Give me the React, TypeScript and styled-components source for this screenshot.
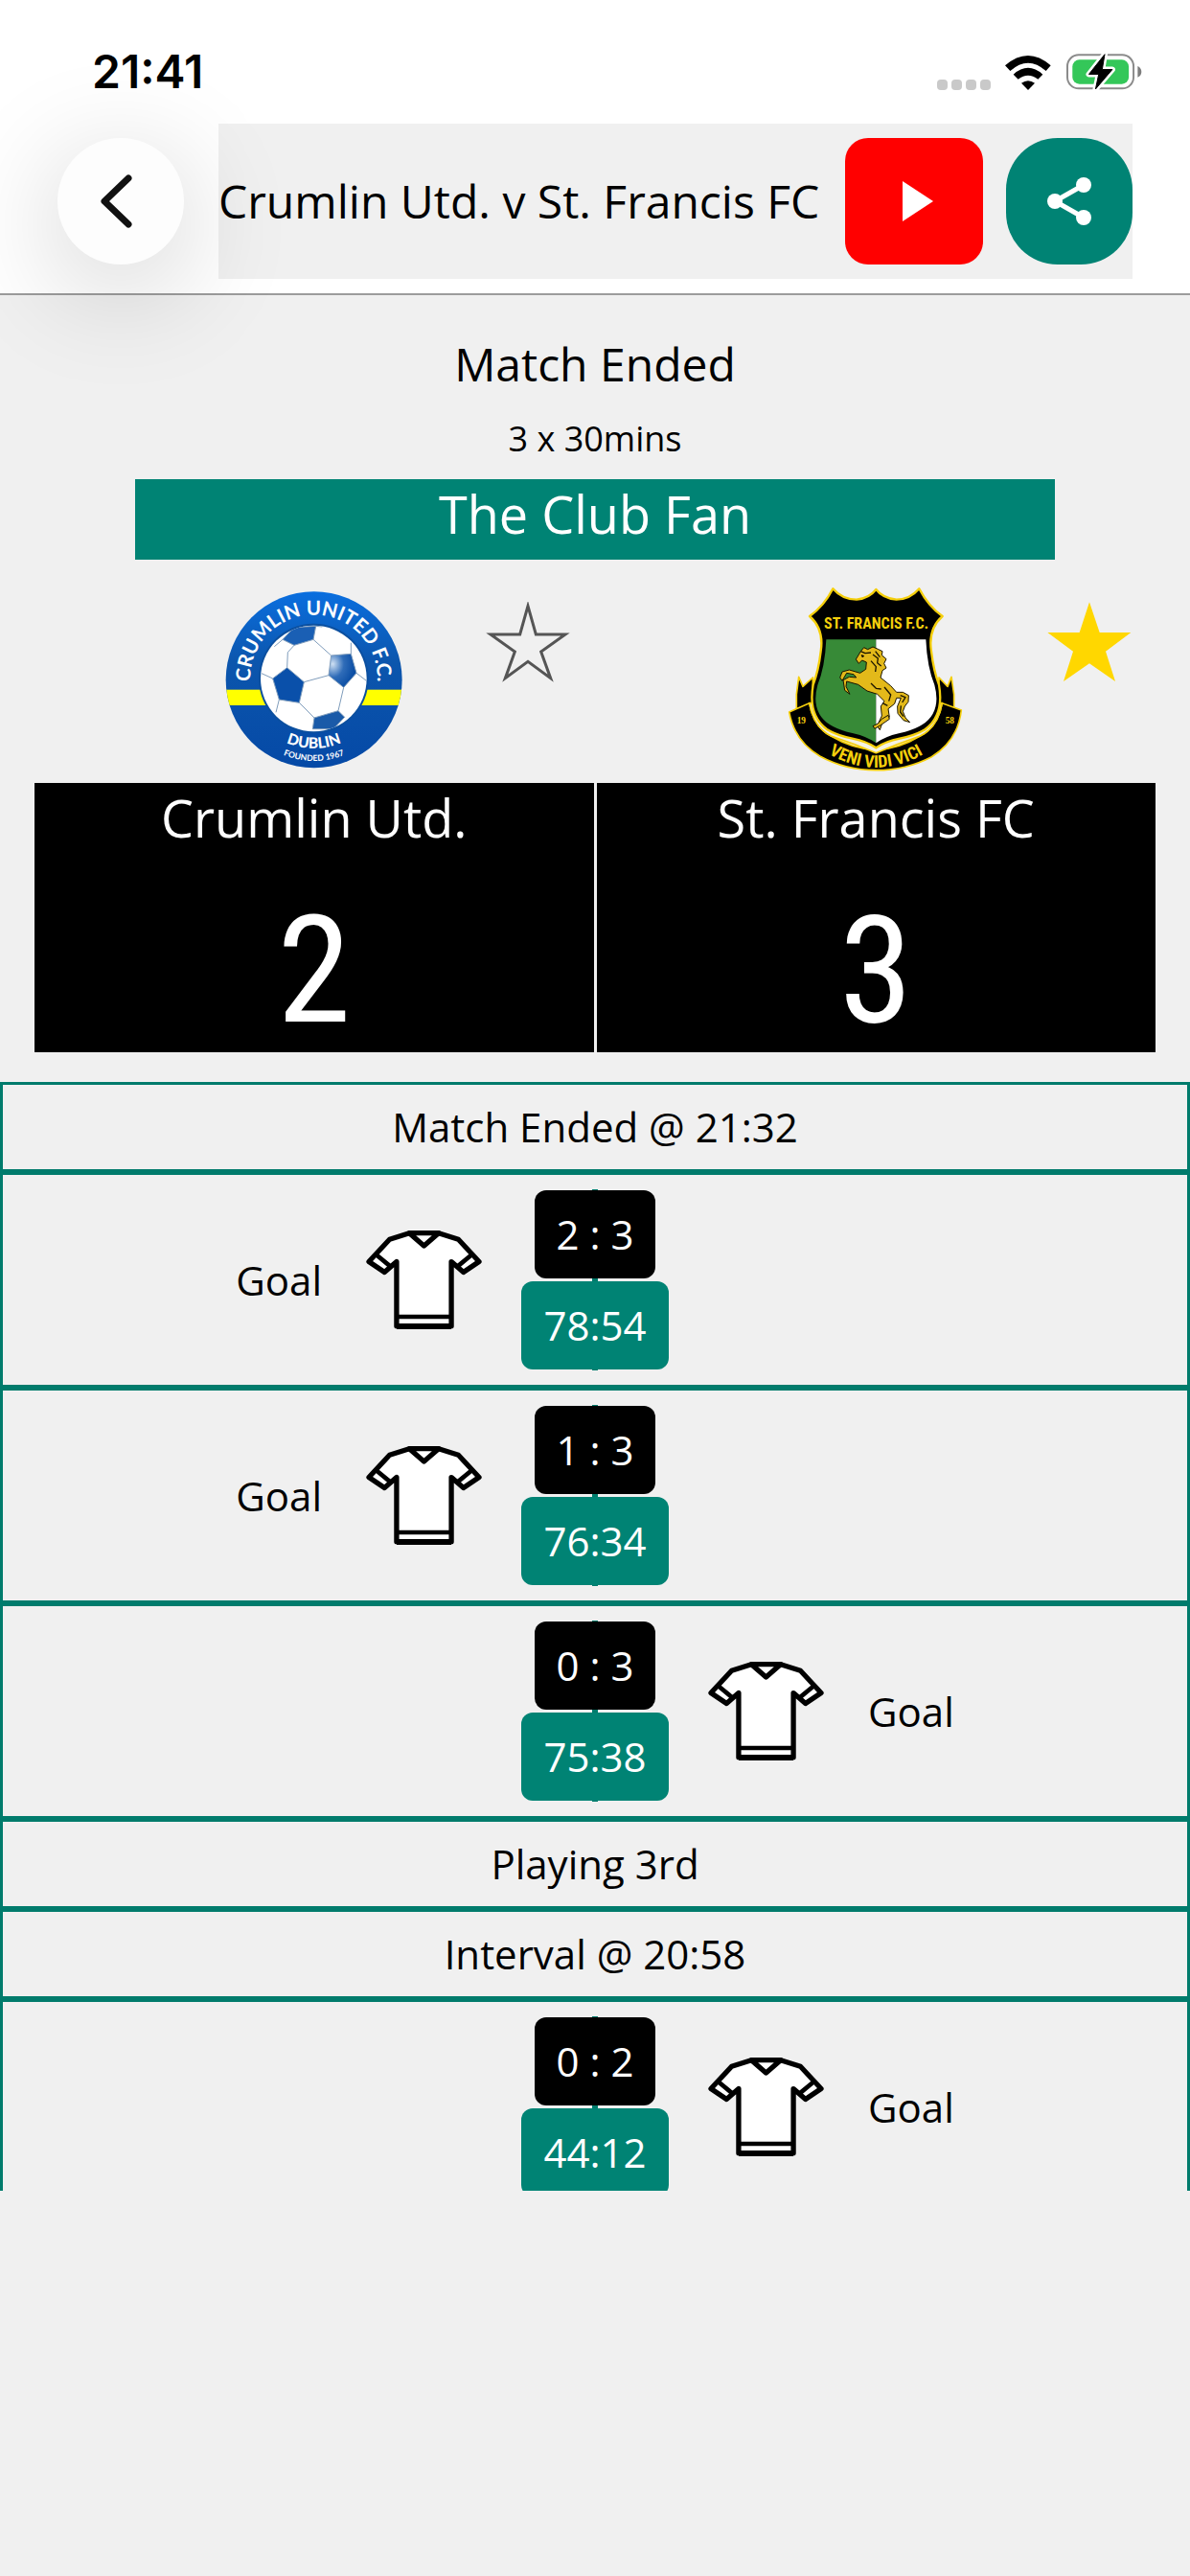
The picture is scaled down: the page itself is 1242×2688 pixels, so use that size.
import React, { useState } from "react";
import styled, { createGlobalStyle } from "styled-components";

const teal = "#008374";
const line = "#007b6c";
const surface = "#f0f0f0";

const GlobalStyle = createGlobalStyle`
  * { box-sizing: border-box; }
  body {
    margin: 0;
    background: ${surface};
    color: #000;
    font-family: "Open Sans", "Noto Sans", sans-serif;
  }
  button {
    margin: 0;
    padding: 0;
    border: 0;
    background: none;
    font: inherit;
    color: inherit;
    cursor: pointer;
  }
  svg { display: block; }
`;

const Screen = styled.div`
  display: flex;
  flex-direction: column;
  height: 100vh;
  padding-bottom: 402px;
  overflow: hidden;
`;

const TopArea = styled.header`
  flex: none;
  background: #fff;
  border-bottom: 2px solid #9c9c9c;
  padding-bottom: 15px;
`;

const StatusBar = styled.div`
  display: flex;
  align-items: center;
  height: 129px;
  padding: 20px 50px 0 96px;
`;

const Clock = styled.time`
  flex: 1;
  font: 600 48px/56px Inter, Roboto, sans-serif;
`;

const StatusIcons = styled.div`
  display: flex;
  align-items: flex-end;
  gap: 15px;
`;

const Dots = styled.div`
  display: flex;
  gap: 4px;
`;

const Dot = styled.i`
  width: 11px;
  height: 11px;
  border-radius: 4px;
  background: #c9c9c9;
`;

const NavBar = styled.nav`
  display: flex;
  align-items: center;
  gap: 36px;
  padding: 0 60px;
`;

const BackButton = styled.button`
  position: relative;
  z-index: 1;
  display: grid;
  place-items: center;
  flex: none;
  width: 132px;
  height: 132px;
  border-radius: 50%;
  background: #fdfdfd;
  box-shadow: 0 24px 120px rgba(0, 0, 0, 0.2);
`;

const TitleBar = styled.div`
  display: flex;
  flex: 1;
  align-items: center;
  gap: 24px;
  height: 162px;
  background: ${surface};
`;

const Title = styled.h1`
  flex: 1;
  margin: 0;
  font-size: 48px;
  font-weight: 400;
  line-height: 72px;
  white-space: nowrap;
`;

const ActionButton = styled.button<{ $width: number; $radius: number; $color: string }>`
  display: grid;
  place-items: center;
  flex: none;
  width: ${(p) => p.$width}px;
  height: 132px;
  border-radius: ${(p) => p.$radius}px;
  background: ${(p) => p.$color};
`;

const Summary = styled.section`
  flex: none;
  padding-top: 36px;
  text-align: center;
`;

const MatchStatus = styled.h2`
  margin: 0;
  font-size: 48px;
  font-weight: 400;
  line-height: 72px;
`;

const MatchLength = styled.p`
  margin: 6px 0;
  font-size: 36px;
  line-height: 72px;
`;

const Banner = styled.p`
  margin: 0 141px;
  padding-bottom: 12px;
  background: ${teal};
  color: #fff;
  font-size: 54px;
  line-height: 72px;
`;

const Teams = styled.section`
  display: grid;
  flex: none;
  grid-template-columns: 1fr 1fr;
  column-gap: 3px;
  padding: 0 36px;
`;

const CrestRow = styled.div`
  display: grid;
  grid-template-columns: 1fr auto 1fr;
  align-items: center;
  height: 233px;
  padding: 28px 25px 11px;
`;

const StarButton = styled.button`
  grid-column: 3;
  align-self: start;
  justify-self: end;
  margin-top: 16px;
`;

const CrestSlot = styled.div`
  grid-column: 2;
`;

const ScorePanel = styled.div`
  padding-bottom: 7px;
  background: #000;
  color: #fff;
  text-align: center;
`;

const TeamName = styled.h3`
  margin: 0;
  font-size: 54px;
  font-weight: 400;
  line-height: 72px;
`;

const BigScore = styled.div`
  margin-top: 46px;
  font: 400 156px/156px "Roboto Condensed", Roboto, sans-serif;
`;

const Timeline = styled.ul`
  flex: 1;
  min-height: 0;
  margin: 31px 0 0;
  padding: 0;
  overflow: hidden;
  list-style: none;
  font-size: 42px;
`;

const PhaseRow = styled.li`
  height: 94px;
  border: 3px solid ${line};
  line-height: 88px;
  text-align: center;
`;

const EventRow = styled.li`
  display: grid;
  grid-template-columns: 1fr 180px 1fr;
  height: 225px;
  padding: 15px 0;
  border: 3px solid ${line};
`;

const EventSide = styled.div<{ $away?: boolean }>`
  display: flex;
  flex-direction: ${(p) => (p.$away ? "row" : "row-reverse")};
  align-items: center;
  gap: 46px;
  padding: 0 28px;
`;

const EventCentre = styled.div`
  display: flex;
  flex-direction: column;
  align-items: center;
  gap: 3px;
  padding: 1px 0;
  background: linear-gradient(${line}, ${line}) center / 6px 100% no-repeat;
`;

const Badge = styled.span<{ $color: string }>`
  height: 92px;
  padding: 0 23px;
  border-radius: 12px;
  background: ${(p) => p.$color};
  color: #fff;
  line-height: 92px;
  white-space: nowrap;
`;

function SignalIcons() {
  return (
    <StatusIcons>
      <Dots>
        <Dot />
        <Dot />
        <Dot />
        <Dot />
      </Dots>
      <svg width="48" height="36" viewBox="268 47 144 108" aria-label="Wi-Fi">
        <path d="M268 78Q340 16 411 78L396 95Q340 45 284 95Z" />
        <path d="M294 106Q340 65 386 106L371 121Q340 97 309 121Z" />
        <path d="M319 133Q340 118 361 133L340 155Z" />
      </svg>
      <svg width="80" height="38" viewBox="453 45 240 115" aria-label="Battery charging">
        <rect x="458" y="49" width="209" height="106" rx="36" fill="none" stroke="#8b8b8b" strokeWidth="6" />
        <rect x="474" y="64" width="178" height="77" rx="22" fill="#34c759" />
        <path d="M680 84Q692 90 692 102Q692 115 680 120Z" fill="#7d7d7d" />
        <path
          d="M576 47L526 110H557L547 157L600 95H568Z"
          stroke="#fff"
          strokeWidth="18"
          strokeLinejoin="round"
        />
        <path d="M576 47L526 110H557L547 157L600 95H568Z" stroke="#000" strokeWidth="3" strokeLinejoin="round" />
      </svg>
    </StatusIcons>
  );
}

function CrumlinCrest() {
  return (
    <svg width="185" height="185" viewBox="46 49 555 555" role="img" aria-label="Crumlin United crest">
      <defs>
        <linearGradient id="crumlinBlue" x1="0" y1="0" x2="0" y2="1">
          <stop offset="0" stopColor="#0a6fe0" />
          <stop offset="0.4" stopColor="#0c56ad" />
          <stop offset="1" stopColor="#0549a6" />
        </linearGradient>
        <radialGradient id="shine" cx="0.15" cy="0.3" r="0.8">
          <stop offset="0" stopColor="#cfe0f3" />
          <stop offset="0.5" stopColor="#2f6cb8" />
          <stop offset="1" stopColor="#0a4da4" />
        </radialGradient>
        <clipPath id="crumlinRound">
          <circle cx="324" cy="326" r="276" />
        </clipPath>
        <clipPath id="ballRound">
          <circle cx="323" cy="322" r="166" />
        </clipPath>
        <path id="crumlinTop" d="M127 350A199 199 0 1 1 521 350" />
        <path id="crumlinCity" d="M124 408A217 217 0 0 0 524 408" />
        <path id="crumlinYear" d="M100 448A256 256 0 0 0 548 448" />
      </defs>
      <g clipPath="url(#crumlinRound)">
        <rect x="46" y="46" width="556" height="558" fill="url(#crumlinBlue)" />
        <rect x="46" y="357" width="556" height="49" fill="#ffff00" />
      </g>
      <circle cx="323" cy="322" r="172" fill="#0b4f9f" />
      <circle cx="323" cy="322" r="166" fill="#fff" />
      <g clipPath="url(#ballRound)" stroke="#7f9cbb" strokeWidth="3">
        <path d="M226 200L262 162L330 158L322 200L262 218Z" fill="#1a5fb4" />
        <path d="M378 250L440 245L457 305L417 350L370 312Z" fill="url(#shine)" />
        <path d="M240 288L293 333L278 398L215 388L195 322Z" fill="#0a50aa" />
        <path d="M325 445L400 423L420 443L385 480L320 480Z" fill="#1a5aa8" />
        <path
          d="M262 218L242 240L240 288M322 200L378 250M370 312L293 333M195 322L160 306M278 398L325 445M215 388L205 428M417 350L400 423M457 305L492 332M440 245L440 210M226 200L200 222M330 158L350 160"
          fill="none"
        />
      </g>
      <g fill="#fff" textAnchor="middle" fontFamily="Lato, sans-serif" fontWeight="700">
        <text fontSize="62">
          <textPath href="#crumlinTop" startOffset="50%">CRUMLIN UNITED F.C.</textPath>
        </text>
        <text fontSize="47" fontWeight="900">
          <textPath href="#crumlinCity" startOffset="50%">DUBLIN</textPath>
        </text>
        <text fontSize="26">
          <textPath href="#crumlinYear" startOffset="50%">FOUNDED 1967</textPath>
        </text>
      </g>
    </svg>
  );
}

function FrancisCrest() {
  const gold = "#f5cf0c";
  return (
    <svg width="184" height="194" viewBox="69 37 552 582" role="img" aria-label="St. Francis crest">
      <defs>
        <path id="motto" d="M150 530Q250 604 346 604Q445 604 542 530" />
      </defs>
      <g fill="#000" stroke={gold} strokeWidth="5" strokeLinejoin="round">
        <path d="M97 420V375L104 320L117 350L148 322V420Z" />
        <path d="M590 420V375L582 320L570 350L543 322V420Z" />
        <path
          d="M74 430L137 402Q150 478 205 505Q346 590 484 505Q540 478 553 402L613 424Q602 520 520 570Q440 612 346 612Q250 612 170 568Q90 520 74 430Z"
        />
        <path d="M137 402Q150 478 205 505Q275 528 346 558Q417 528 484 505Q540 478 553 402Z" fill="#f4f2e4" />
        <path
          d="M211 44Q240 78 285 78Q325 74 346 46Q367 74 410 78Q452 78 481 44Q510 100 554 130Q508 170 519 240Q526 300 543 345Q560 440 500 484Q470 503 420 513Q375 522 346 542Q317 522 272 513Q222 503 192 484Q132 440 149 345Q166 300 173 240Q184 170 138 130Q182 100 211 44Z"
          strokeWidth="7"
        />
      </g>
      <path d="M190 203H346V527Q318 507 275 497Q228 487 202 470Q140 430 163 345Q186 290 190 203Z" fill="#378a37" />
      <path d="M502 203H346V527Q374 507 417 497Q464 487 490 470Q552 430 529 345Q506 290 502 203Z" fill="#fff" />
      <g stroke="#1a1400" strokeWidth="3" strokeLinejoin="round">
        <path
          d="M283 265L298 240L308 228L320 234L336 226L352 233L366 240L364 252L378 264L371 278L378 292L366 300L360 322L392 348L410 368L430 368L448 378L447 398L436 412L430 428L438 448L452 462L432 456L414 434L413 412L424 386L410 386L404 404L384 420L388 446L368 456L358 486L349 474L364 442L361 412L372 396L350 374L318 364L290 344L254 334L252 350L264 374L248 362L243 330L262 320L284 322L276 312L254 308L240 332L233 322L240 304L262 298L296 308L314 296L316 274L302 268L292 278Z"
          fill="#e3b91a"
        />
        <path d="M384 440L364 452L352 466L336 474L342 482L362 470L388 452Z" fill="#e3b91a" />
        <path
          d="M298 240L312 246L330 244M336 250L352 262L350 276L362 286M344 240L358 258M330 270L346 288L344 304M330 340L346 356L362 358M372 352L392 376L386 396M366 402L382 410M422 378L438 384L428 400M424 410L422 430L432 444"
          fill="none"
          strokeWidth="4"
        />
        <path d="M300 252L308 254L304 259Z" />
      </g>
      <g
        fill={gold}
        textAnchor="middle"
        fontFamily='"Roboto Condensed", Roboto, sans-serif'
        fontWeight="700"
      >
        <text x="347" y="168" fontSize="48">
          ST. FRANCIS F.C.
        </text>
        <text fontSize="54">
          <textPath href="#motto" startOffset="50%">
            VENI VIDI VICI
          </textPath>
        </text>
        <g fontFamily='"Liberation Serif", serif' fontSize="28">
          <text x="112" y="465">19</text>
          <text x="577" y="466">58</text>
        </g>
      </g>
    </svg>
  );
}

function Jersey() {
  return (
    <svg width="121" height="105" viewBox="36 219 364 316" aria-hidden="true">
      <g stroke="#000" strokeWidth="16" strokeLinejoin="round" fill="#fff">
        <path d="M172 230L110 250L45 320L94 353L132 320V522H304V320L342 353L391 320L326 250L264 230Z" />
        <path d="M172 230H264L218 270Z" />
        <path d="M68 298L114 336M368 298L322 336M132 493H304" fill="none" strokeWidth="14" />
        <path d="M132 523H304" strokeWidth="18" />
      </g>
    </svg>
  );
}

function Star({ name, initial }: { name: string; initial: boolean }) {
  const [on, setOn] = useState(initial);
  return (
    <StarButton aria-label={`Follow ${name}`} aria-pressed={on} onClick={() => setOn(!on)}>
      <svg width="88" height="84" viewBox="879 85 264 252">
        {on ? (
          <path d="M1011 86L1043 181H1141L1062 240L1092 334L1011 278L930 334L960 240L880 181H980Z" fill="#ffd700" />
        ) : (
          <path
            d="M1011 98L1036 187H1128L1052 241L1082 324L1011 272L940 324L970 241L894 187H986Z"
            fill="none"
            stroke="#555"
            strokeWidth="9"
          />
        )}
      </svg>
    </StarButton>
  );
}

interface TeamProps {
  name: string;
  score: number;
  followed: boolean;
  crest: React.ReactNode;
}

function Team({ name, score, followed, crest }: TeamProps) {
  return (
    <div>
      <CrestRow>
        <CrestSlot>{crest}</CrestSlot>
        <Star name={name} initial={followed} />
      </CrestRow>
      <ScorePanel>
        <TeamName>{name}</TeamName>
        <BigScore>{score}</BigScore>
      </ScorePanel>
    </div>
  );
}

type Entry =
  | { kind: "phase"; text: string }
  | { kind: "goal"; away: boolean; score: string; time: string };

const entries: Entry[] = [
  { kind: "phase", text: "Match Ended @ 21:32" },
  { kind: "goal", away: false, score: "2 : 3", time: "78:54" },
  { kind: "goal", away: false, score: "1 : 3", time: "76:34" },
  { kind: "goal", away: true, score: "0 : 3", time: "75:38" },
  { kind: "phase", text: "Playing 3rd" },
  { kind: "phase", text: "Interval @ 20:58" },
  { kind: "goal", away: true, score: "0 : 2", time: "44:12" },
];

function Scorer() {
  return (
    <>
      <Jersey />
      <span>Goal</span>
    </>
  );
}

export default function App() {
  return (
    <Screen>
      <GlobalStyle />
      <TopArea>
        <StatusBar>
          <Clock>21:41</Clock>
          <SignalIcons />
        </StatusBar>
        <NavBar>
          <BackButton aria-label="Back">
            <svg width="44" height="60" viewBox="0 0 44 60" fill="none" stroke="#111" strokeWidth="7">
              <path d="M30 6L5 30L30 54" strokeLinecap="round" strokeLinejoin="round" />
            </svg>
          </BackButton>
          <TitleBar>
            <Title>Crumlin Utd. v St. Francis FC</Title>
            <ActionButton $width={144} $radius={24} $color="#ff0000" aria-label="Watch video">
              <svg width="48" height="42" viewBox="0 0 48 42" fill="#fff">
                <path d="M12 0L44 21L12 42Z" />
              </svg>
            </ActionButton>
            <ActionButton $width={132} $radius={54} $color={teal} aria-label="Share">
              <svg width="46" height="50" viewBox="0 0 46 50" fill="#fff">
                <path d="M38 8L8 25L38 42" fill="none" stroke="#fff" strokeWidth="5" />
                <circle cx="38" cy="8" r="8" />
                <circle cx="8" cy="25" r="8" />
                <circle cx="38" cy="42" r="8" />
              </svg>
            </ActionButton>
          </TitleBar>
        </NavBar>
      </TopArea>

      <Summary>
        <MatchStatus>Match Ended</MatchStatus>
        <MatchLength>3 x 30mins</MatchLength>
        <Banner>The Club Fan</Banner>
      </Summary>

      <Teams>
        <Team name="Crumlin Utd." score={2} followed={false} crest={<CrumlinCrest />} />
        <Team name="St. Francis FC" score={3} followed crest={<FrancisCrest />} />
      </Teams>

      <Timeline>
        {entries.map((entry, i) =>
          entry.kind === "phase" ? (
            <PhaseRow key={i}>{entry.text}</PhaseRow>
          ) : (
            <EventRow key={i}>
              <EventSide>{!entry.away && <Scorer />}</EventSide>
              <EventCentre>
                <Badge $color="#000">{entry.score}</Badge>
                <Badge $color={teal}>{entry.time}</Badge>
              </EventCentre>
              <EventSide $away>{entry.away && <Scorer />}</EventSide>
            </EventRow>
          ),
        )}
      </Timeline>
    </Screen>
  );
}
